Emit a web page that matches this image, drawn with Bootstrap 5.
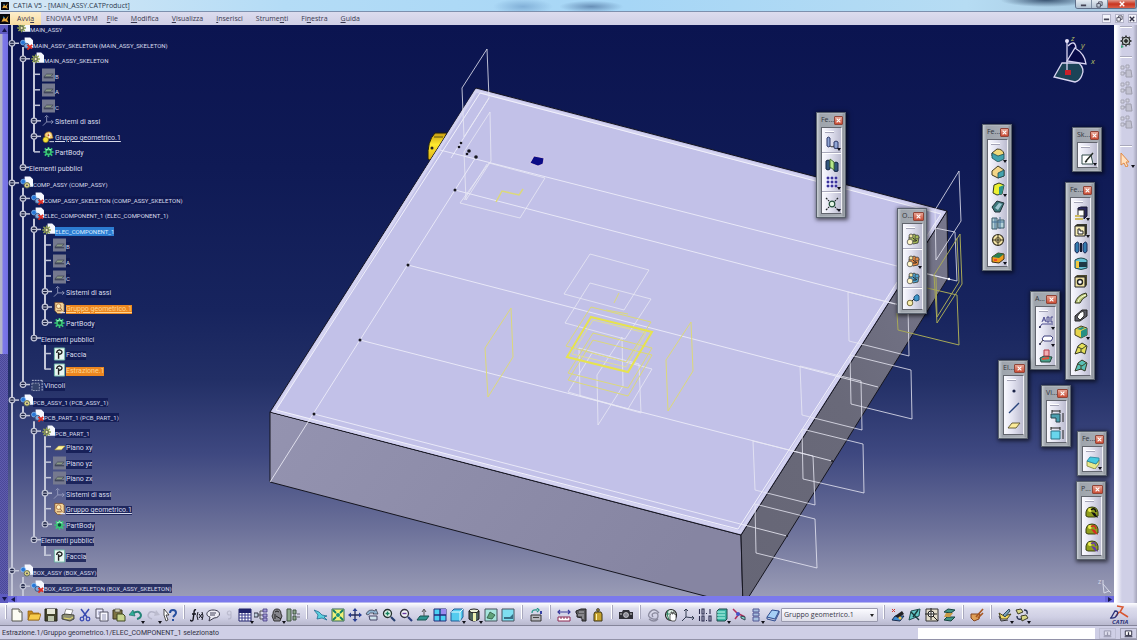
<!DOCTYPE html>
<html lang="it">
<head>
<meta charset="utf-8">
<meta name="viewport" content="width=device-width, initial-scale=1">
<title>CATIA V5 - [MAIN_ASSY.CATProduct]</title>
<link href="https://cdn.jsdelivr.net/npm/bootstrap@5.3.0/dist/css/bootstrap.min.css" rel="stylesheet">
<style>
body{font-family:"Open Sans","Noto Sans",sans-serif;font-size:7px;line-height:12px;color:#303044;background:#cfcfe6}
button,input,select{font-family:inherit}
button{border:0;background:none;padding:0;color:inherit}
svg{display:block}
.titlebar{height:12px;padding:1px 0 0 1px;border-bottom:1px solid #7d90ae;color:#2c3a50;
 background:radial-gradient(ellipse 30px 8px at 46% 60%,#6d9cc8aa,transparent),radial-gradient(ellipse 32px 6px at 52% 60%,#486c98aa,transparent),radial-gradient(ellipse 46px 7px at 92% 0,#27405fdd,transparent),linear-gradient(90deg,#d6e8f5,#b4dcf6 25%,#a6d6f6 55%,#b6dcf3 85%,#a3c4dc)}
.winbtns{height:9px;margin-top:-1px;border:1px solid #60708a;border-top:0;border-radius:0 0 3px 3px;overflow:hidden}
.winbtns button{width:16px;background:linear-gradient(#e4ebf2,#b3c2d2);border-right:1px solid #7f8ea2;display:flex;align-items:center;justify-content:center}
.winbtns .quit{width:28px;background:linear-gradient(#e19a8c,#c83520 50%,#d9604a)}
.menubar{height:13px;background:linear-gradient(#dcdcee,#cfcfe5)}
.menubar a{color:#3a3a50;text-decoration:none;padding:0 7px 0 6px;line-height:13px}
.menubar a.start{padding:0 7px;background:linear-gradient(#fdeecb,#f8dc9f)}
.menubar a.wide{padding:0 3px 0 5px}
.docbtns button{width:9px;height:9px;background:#f4f4fb;border:1px solid #b3b3c8}
.vscroll{width:8px;background:linear-gradient(90deg,#b4b4c8 2px,#7d79ea 3px,#7470e2)}
.vscroll button{height:9px;background:#5d5ac0;display:flex;align-items:center;justify-content:center}
.vthumb{flex:4 1 0}
.vrest{flex:3 1 0;background:repeating-conic-gradient(#5f5cae 0 25%,#4a4898 0 50%) 0 0/2px 2px}
.hscroll{height:7px;background:#7b79ec;border-bottom:1px solid #b6b6ee}
.hscroll button{width:9px;background:#6a68dc;display:flex;align-items:center;justify-content:center}
.stage{background:linear-gradient(#0b1450 0,#0f1a55 25%,#17245e 50%,#222f66 62%,#3e4880 75%,#6b7099 88%,#9a9cb6 100%)}
.scene{position:absolute;inset:0;width:100%;height:100%}
.tree{position:relative;flex:1;margin-top:-3px;width:240px}
.branches{position:absolute;inset:0;width:240px;height:100%}
.node{flex:1 1 0;min-height:0;position:relative}
.node svg{width:13px;height:14px;flex:none;margin-top:-3px}
.node a{color:#d8dbec;text-decoration:none;line-height:9px;white-space:nowrap;background:#0f1850cc;font-family:Roboto,"Open Sans",sans-serif;font-size:6px}
.node a.mix{font-size:7px}
.node a.ul{text-decoration:underline}
.node a.sel{background:#2c7cd2;color:#d8ecff}
.node a.hot{background:#ec861f;color:#ffd58e}
.lv0{padding-left:9px}.lv1{padding-left:12px}.lv2{padding-left:23px}.lv3{padding-left:34px}.lv4{padding-left:45px}
.pub1{padding-left:21px}.pub2{padding-left:33px}
.palette{position:absolute;width:30px;padding:0 3px 3px 4px;background:linear-gradient(90deg,#c7ccd2,#9ea4ac 12%,#a9aeb5 88%,#82878f);border:1px solid #59616d;outline:1px solid #c9ced555;outline-offset:-2px;box-shadow:1px 1px 4px 1px #0009}
.palette header{height:14px;color:#30343c;line-height:14px}
.palette header button{width:11px;height:9px;margin-right:-1px;background:linear-gradient(#e8a595,#cb4c35);border:1px solid #8f4438;border-radius:1px;display:flex;align-items:center;justify-content:center}
.pbody{border:1px solid #62656e;border-right-color:#f0f0f5;padding:6px 0 1px;background:linear-gradient(90deg,#fafaff,#e2e2f0 45%,#bcbcd0);position:relative}
.pbody::before{content:"";position:absolute;left:3px;top:3px;width:9px;height:2px;background:#fff;border-bottom:1px solid #a5a5b8}
.pbody hr,.rail hr{margin:2px 0;border:0;height:1px;background:#fff;opacity:1;box-shadow:0 -1px #a9a9bc}
.tool{width:17px;height:17px;position:relative;display:flex;align-items:center;justify-content:center;flex:none}
.tool svg{width:14px;height:14px}
.drop::after{content:"";position:absolute;right:-1px;bottom:0;border:2px solid transparent;border-top:3px solid #101018;border-bottom:0}
.tight .tool{width:16px}
.dim{opacity:.35}
.rail{width:23px;padding-top:2px;background:linear-gradient(90deg,#fff 2px,#eeeef8 4px,#cfcfe6 8px,#cfcfe6 19px,#a5a5ba)}
.rail hr{width:12px;margin:0}
.toolbar{height:23px;padding-top:2px;background:linear-gradient(#fdfdff,#dcdcec 25%,#cfcfe4 65%,#b9b9cf);border-bottom:1px solid #85859a}
.grip{width:11px;height:14px;flex:none;align-self:flex-start;background:linear-gradient(90deg,transparent 5px,#fff 5px,#fff 6px,#a9a9be 6px,#a9a9be 7px,transparent 7px)}
.toolbar .grip:first-child{width:8px}
.picker{position:relative;width:97px;height:14px}
.picker select{width:100%;height:14px;padding:0 2px;font-size:7px;line-height:12px;color:#383848;border:1px solid #9a9aae;border-radius:1px;background:linear-gradient(#fbfbff,#dedee9);appearance:none}
.picker::after{content:"";position:absolute;right:4px;top:6px;border:2px solid transparent;border-top:3px solid #222;border-bottom:0}
.status{height:14px;padding:1px 0 0 2px;border-bottom:1px solid #9292a8;font-family:Roboto,"Open Sans",sans-serif}
.status input{width:177px;height:11px;border:0;background:#fff;font-size:7px;padding:0 3px}
.status button{width:17px;height:11px;border:1px solid #a0a0b4;display:flex;align-items:center;justify-content:center}
</style>
<script src="https://cdn.jsdelivr.net/npm/bootstrap@5.3.0/dist/js/bootstrap.bundle.min.js"></script>
</head>
<body>
<svg width="0" height="0" class="position-absolute" aria-hidden="true"><defs>
<g id="gear"><path d="M7 1.5v11M1.5 7h11M3 3l8 8M11 3l-8 8" stroke="currentColor" stroke-width="1.8"/><circle cx="7" cy="7" r="3.4" fill="currentColor"/></g>
<symbol id="i-app" viewBox="0 0 14 14"><path fill="#07070c" d="M0 0h14v14H0z"/><path d="M2 11 5 5l3 2 4-5-2 6 2 4-5-2z" fill="#e8a83c"/><path d="m4 3 3 2-2 1z" fill="#4ad"/></symbol>
<symbol id="i-doc" viewBox="0 0 14 14"><path d="M5 0h6l3 3v8H5z" fill="#f6f8ff"/><circle cx="3.5" cy="5.5" r="2.6" fill="#2877d8" stroke="#9bd0ff" stroke-width=".7"/><circle cx="7.5" cy="9.5" r="3" fill="#ddd284" stroke="#5d6b52"/><circle cx="7.5" cy="9.5" r="1" fill="#446"/></symbol>
<symbol id="i-docr" viewBox="0 0 14 14"><path d="M5 0h6l3 3v8H5z" fill="#f6f8ff"/><circle cx="3.2" cy="5.5" r="2.6" fill="#2877d8" stroke="#9bd0ff" stroke-width=".7"/><circle cx="7" cy="9" r="2.7" fill="#80aadd" stroke="#35507d"/><path d="m8 8 5 4M13 8l-5 5" stroke="#e02b22" stroke-width="2"/></symbol>
<symbol id="i-part" viewBox="0 0 14 14"><path d="M6 0h5l3 3v8H6z" fill="#f6f8ff"/><g transform="translate(-1 1) scale(.85)" color="#94a652"><use href="#gear"/></g><circle cx="5" cy="7" r="1.8" fill="#eff0b0" stroke="#555"/></symbol>
<symbol id="i-plane" viewBox="0 0 14 14"><path fill="#75798f" d="M0 0h14v14H0z"/><path d="m2 9 3-3h7l-3 3z" fill="#8c9a87" stroke="#33394d" stroke-width=".7"/><path d="M2 10h10" stroke="#2e3448"/></symbol>
<symbol id="i-planey" viewBox="0 0 14 14"><path d="m2 10 4-4h7L9 10z" fill="#fff39a" stroke="#c6ae3c" stroke-width=".6"/></symbol>
<symbol id="i-planeb" viewBox="0 0 14 14"><path d="m1 10 4-5h8l-4 5z" fill="#fbeb9a" stroke="#5c532a" stroke-width=".9"/></symbol>
<symbol id="i-axis" viewBox="0 0 14 14"><path d="M5 2v6l-4 4M5 8h7M3 3l2-2 2 2M10 6l2 2-2 2" fill="none" stroke="#9da4c4" stroke-width=".9"/></symbol>
<symbol id="i-set" viewBox="0 0 14 14"><path d="M3 6a4 4 0 0 1 8-1l1 3-3 1H4z" fill="#f7d274" stroke="#a66a22" stroke-width=".7"/><circle cx="4" cy="10" r="3" fill="#f4e23c" stroke="#8b7a12" stroke-width=".7"/><path d="M6 5h4M8 3v5M8 12h5" stroke="#fff" stroke-width=".9"/><circle cx="7" cy="5" r="1" fill="#b5452c"/></symbol>
<symbol id="i-setb" viewBox="0 0 14 14"><path d="M2 1h8l2 2v8l-3 2H5l-3-3z" fill="#f3d59a" stroke="#7b4a25" stroke-width=".8"/><circle cx="6" cy="5" r="2.500" fill="#fff0c2" stroke="#a35e2c" stroke-width=".8"/><path d="M4 10h5M8 7l2 3" stroke="#8a5a3a"/><path d="M8 12h5" stroke="#e6e6f2" stroke-width="1.200"/></symbol>
<symbol id="i-body" viewBox="0 0 14 14"><g color="#38c777"><use href="#gear"/></g><circle cx="7" cy="7" r="1.9" fill="#0f4a3b"/><path d="M4 5q3-3 6 0" stroke="#b5ffd0" fill="none"/></symbol>
<symbol id="i-pub" viewBox="0 0 14 14"><path fill="#e8f6f2" stroke="#6fb7a8" d="M1.500.5h11v13h-11z"/><path d="M6 12V5M4 6q0-3 3-3.500 4 1 2 4-1 1-3 1" fill="none" stroke="#202020" stroke-width="1.500"/></symbol>
<symbol id="i-cons" viewBox="0 0 14 14"><path d="M1 5h8v8H1z" fill="#34436c" stroke="#99a2bd" stroke-dasharray="2 1"/><path d="M1 2h12M12 2v11" stroke="#c6cbe0" stroke-dasharray="2 1"/></symbol>
<symbol id="i-new" viewBox="0 0 14 14"><path d="M2 1h7l3 3v9H2z" fill="#fdfdf4" stroke="#55554d"/><path d="M9 1v3h3" fill="#ddc" stroke="#55554d" stroke-width=".8"/></symbol>
<symbol id="i-open" viewBox="0 0 14 14"><path d="M1 3h4l1 2h6v7H1z" fill="#c98c20" stroke="#8d5d0c" stroke-width=".7"/><path d="m1 12 2-6h11l-2 6z" fill="#f7cb4b" stroke="#8d5d0c" stroke-width=".7"/></symbol>
<symbol id="i-save" viewBox="0 0 14 14"><path d="M1 1h12v12H1z" fill="#43442d" stroke="#22231a"/><path d="M3 1h8v5H3z" fill="#e5e6d6"/><path d="M4 8h6v5H4z" fill="#bec6ae"/></symbol>
<symbol id="i-print" viewBox="0 0 14 14"><path d="m5 1 7 1-2 5H3z" fill="#fff" stroke="#666" stroke-width=".7"/><path d="m1 7 3-1 9 1v4l-4 2-8-2z" fill="#8d8f75" stroke="#2e2e28" stroke-width=".8"/><path d="m3 10 6 1 3-2" stroke="#e8dc6b" fill="none"/></symbol>
<symbol id="i-cut" viewBox="0 0 14 14"><path d="m3 1 6 8M11 1 5 9" stroke="#384bb0" stroke-width="1.500"/><circle cx="4" cy="11" r="1.800" fill="none" stroke="#3c4db5" stroke-width="1.300"/><circle cx="10" cy="11" r="1.800" fill="none" stroke="#3c4db5" stroke-width="1.300"/></symbol>
<symbol id="i-copy" viewBox="0 0 14 14"><path d="M1 1h7v9H1z" fill="#eef" stroke="#556"/><path d="M5 4h8v9H5z" fill="#f8f8ff" stroke="#556"/><path d="M7 7h4M7 9h4M7 11h4M3 4h2M3 6h1" stroke="#7b7fa5" stroke-width=".8"/></symbol>
<symbol id="i-paste" viewBox="0 0 14 14"><path d="M1 2h9v9H1z" fill="#7e7442" stroke="#3b371f"/><path d="M3 1h5v3H3z" fill="#d0cfae" stroke="#444" stroke-width=".6"/><path d="M5 6h6l2 2v5H5z" fill="#c7d48e" stroke="#3f4722"/></symbol>
<symbol id="i-undo" viewBox="0 0 14 14"><path d="M3 6q7-5 9 1 0 3-4 4" fill="none" stroke="#238477" stroke-width="2"/><path d="m0 7 4-5 2 6z" fill="#2eae99" stroke="#14645a" stroke-width=".6"/></symbol>
<symbol id="i-redo" viewBox="0 0 14 14"><path d="M11 6Q4 1 2 7q0 3 4 4" fill="none" stroke="#b4b4c8" stroke-width="1.500"/><path d="m14 7-4-5-2 6z" fill="#bcbcce"/></symbol>
<symbol id="i-help" viewBox="0 0 14 14"><path d="m1 1 5 6H3l2 5-2 1-2-6z" fill="#fff" stroke="#222" stroke-width=".8"/><path d="M7 5q0-3 3-3t3 3q0 1-3 4M10 11v2" fill="none" stroke="#264f9f" stroke-width="2"/></symbol>
<symbol id="i-fx" viewBox="0 0 14 14"><path d="M6 2Q4 1 4 5L3 12Q2 14 0 12M2 6h4" fill="none" stroke="#15151e" stroke-width="1.400"/><path d="M8 4q-2 4 0 8M12 4q2 4 0 8M9 6l3 4M12 6l-3 4" fill="none" stroke="#15151e"/></symbol>
<symbol id="i-bubble" viewBox="0 0 14 14"><path d="M7 2c9 0 8 8 1 8l-5 3 1-4C-1 8 0 2 7 2z" fill="#edecf4" stroke="#38384a"/><path d="M4 5h6M4 7h5" stroke="#45455c"/></symbol>
<symbol id="i-nine" viewBox="0 0 14 14"><path d="M9 6a2 2 0 1 1 0-2v5q0 2-3 2" fill="none" stroke="#8d8da2" stroke-width="1.200"/></symbol>
<symbol id="i-table" viewBox="0 0 14 14"><path d="M1 1h12v12H1z" fill="#fff" stroke="#20226a"/><path d="M1 1h12v4H1z" fill="#20226a"/><path d="M4 5v8M7 5v8M10 5v8M1 7h12M1 10h12" stroke="#383b8c"/></symbol>
<symbol id="i-graph" viewBox="0 0 14 14"><path d="M4 7h5M6 7V3h3M6 7v4h3" fill="none" stroke="#555"/><path d="M0 5h4v4H0z" fill="#bfd0de" stroke="#334"/><path d="M9 1h4v3H9zM9 6h4v3H9zM9 10h4v3H9z" fill="#a49ad6" stroke="#423a80" stroke-width=".8"/></symbol>
<symbol id="i-lock" viewBox="0 0 14 14"><path d="M3 6q0-5 4-5t4 5l1 2-2 5H4L2 8z" fill="#85858c" stroke="#333"/><path d="M5 4q2-2 4 0M6 8l5 3M5 6v5" stroke="#222" fill="none"/></symbol>
<symbol id="i-rule" viewBox="0 0 14 14"><path d="M1 1h4v12H1zM7 2h3v4H7zM7 8h3v4H7z" fill="#8ca88d" stroke="#415242"/><path d="M11 6h3M11 9h3" stroke="#667"/></symbol>
<symbol id="i-fly" viewBox="0 0 14 14"><path d="m0 2 5 2 3 3 5 1-3 1 3 3-5-2-5 1 1-4z" fill="#5bd2e0" stroke="#226c91" stroke-width=".8"/></symbol>
<symbol id="i-fit" viewBox="0 0 14 14"><path fill="#f0f27a" stroke="#356b58" d="M1 1h12v12H1z"/><path d="m2 2 3 3m7-3L9 5M2 12l3-3m7 3L9 9" stroke="#108064" stroke-width="1.800"/><circle cx="7" cy="7" r="2" fill="#17927c"/></symbol>
<symbol id="i-pan" viewBox="0 0 14 14"><path d="M7 2v10M2 7h10" stroke="#222a5c" stroke-width="1.300"/><path d="m7 0 2.500 3h-5zM7 14l2.500-3h-5zM0 7l3-2.500v5zM14 7l-3-2.500v5z" fill="#283e94"/></symbol>
<symbol id="i-rot" viewBox="0 0 14 14"><path d="M1 6q3-6 9-3l1-2 2 5-5 0 1-1Q5 4 3 7z" fill="#8fb4d2" stroke="#334" stroke-width=".7"/><path d="M4 8h8v4H5z" fill="#cfe3ec" stroke="#446"/></symbol>
<symbol id="i-zin" viewBox="0 0 14 14"><circle cx="5.500" cy="5.500" r="4" fill="#e1f5ec" stroke="#23302e" stroke-width="1.300"/><path d="m9 9 4 4" stroke="#263e6d" stroke-width="2.200"/><path d="M3.500 5.500h4M5.500 3.500v4" stroke="#15805d" stroke-width="1.400"/></symbol>
<symbol id="i-zout" viewBox="0 0 14 14"><circle cx="5.500" cy="5.500" r="4" fill="#f0f2f6" stroke="#33333f" stroke-width="1.300"/><path d="m9 9 4 4" stroke="#2b3c7d" stroke-width="2.200"/><path d="M3.500 5.500h4" stroke="#6c3aa0" stroke-width="1.400"/></symbol>
<symbol id="i-normal" viewBox="0 0 14 14"><path d="m1 12 3-4h9l-3 4z" fill="#2f9590" stroke="#175351"/><path d="M8 8V2M6 4l2-3 2 3" stroke="#555" fill="none"/></symbol>
<symbol id="i-multi" viewBox="0 0 14 14"><path d="M1 1h12v12H1z" fill="#4cd1f3" stroke="#222b7a"/><path d="M8 1h5v6H8z" fill="#9a8af0"/><path d="M7 1v12M1 7h12" stroke="#222b7a" stroke-width="1.300"/></symbol>
<symbol id="i-cube" viewBox="0 0 14 14"><path d="m1 4 3-3h9v8l-3 4H1z" fill="#54cbee" stroke="#235b97"/><path d="M1 4h9v9M10 4l3-3" fill="none" stroke="#e4fbff"/></symbol>
<symbol id="i-shade" viewBox="0 0 14 14"><ellipse cx="7" cy="3" rx="5" ry="2" fill="#eaf0d9" stroke="#222"/><path d="M2 3v8q5 4 10 0V3q-5 4-10 0z" fill="#4b625b" stroke="#1a1a1a"/><path d="M6 5h3v8H6z" fill="#ebf0b1"/></symbol>
<symbol id="i-view" viewBox="0 0 14 14"><path d="M1 1h12v12H1z" fill="#a6e5dd" stroke="#48525e"/><path d="m3 10 3-6 5 3-3 4z" fill="#5fa178" stroke="#234b35" stroke-width=".7"/></symbol>
<symbol id="i-view2" viewBox="0 0 14 14"><path d="M1 1h12v12H1z" fill="#7edff1" stroke="#48525e"/><path d="M3 9h6l3-3v5H3z" fill="#386f85"/></symbol>
<symbol id="i-catalog" viewBox="0 0 14 14"><path d="M2 7h10v6H2z" fill="#b8b8be" stroke="#333"/><path d="M4 9h6v1H4z" fill="#444"/><path d="M3 5q0-4 5-3M8 0l2 2-2 2" fill="none" stroke="#23988a" stroke-width="1.300"/><path d="M11 3h2v3h-2z" fill="#3742a5"/></symbol>
<symbol id="i-meas" viewBox="0 0 14 14"><path d="M1 4h12M3 2 1 4l2 2M11 2l2 2-2 2" fill="none" stroke="#3a3a9c" stroke-width="1.200"/><path d="M1 9h12v4H1z" fill="#fff" stroke="#8c2650"/><path d="M4 9v2M7 9v2M10 9v2" stroke="#8c2650"/></symbol>
<symbol id="i-clamp" viewBox="0 0 14 14"><path d="m2 3 5-2h5v12H8v-3l-5-1V6l-1-1z" fill="#58595c" stroke="#222"/><path d="M5 4h5M9 6v5M4 7h4" stroke="#b9b9bd"/></symbol>
<symbol id="i-mass" viewBox="0 0 14 14"><circle cx="7" cy="2" r="1.500" fill="#8b7a31" stroke="#333" stroke-width=".7"/><path d="M4 4h6l1 2v7H3V6z" fill="#c5a22f" stroke="#3d3514"/><path d="M5 6h1v6H5z" fill="#fff2ac"/></symbol>
<symbol id="i-cam" viewBox="0 0 14 14"><path d="M0 4h3l1-2h6l1 2h3v7H0z" fill="#303038"/><circle cx="7" cy="7" r="2.500" fill="#8d8d99" stroke="#eee" stroke-width=".6"/><path d="M1 6h2M11 6h2" stroke="#ccc"/></symbol>
<symbol id="i-swirl" viewBox="0 0 14 14"><path d="M12 5Q7-1 3 4t3 7q5 1 5-3T7 5Q4 6 6 9M2 11q5 4 9 0" fill="none" stroke="#8a8a9e" stroke-width="1.300"/></symbol>
<symbol id="i-globe" viewBox="0 0 14 14"><circle cx="7" cy="7" r="5.500" fill="#dfeee4" stroke="#222" stroke-width="1.200"/><path d="M4 2q-2 5 1 10M2 6h4" stroke="#2c8060" fill="none"/><path d="M6 12V7l1-1V4h1v2h1V4h1v2h1l1 1v4l-1 2H8z" fill="#fff" stroke="#222" stroke-width=".7"/></symbol>
<symbol id="i-axes" viewBox="0 0 14 14"><path d="M5 9V1M5 9l8 1M5 9l-4 4M3 3l2-2 2 2M11 8l2 2-2 2" fill="none" stroke="#333c50"/></symbol>
<symbol id="i-tol" viewBox="0 0 14 14"><path d="M1.500 1v5M4 1h2v5H4zM8 5.500h1M12 1v5M1.500 8v5M4 8h2v5H4zM8 12.500h1M11 8h2v5h-2z" fill="none" stroke="#282a4b" stroke-width="1.100"/></symbol>
<symbol id="i-stack" viewBox="0 0 14 14"><path d="m2 3 2-2h8v10l-2 2H2z" fill="#3bb4a4" stroke="#1e4a4a"/><path d="M2 4h8M2 7h8M2 10h8" stroke="#c3fff0"/></symbol>
<symbol id="i-joint" viewBox="0 0 14 14"><path d="m1 1 5 5M3 11l4-5 6 3" stroke="#b02e5c" stroke-width="1.500" fill="none"/><circle cx="6" cy="6" r="2" fill="#4554c8"/><path d="m9 8 4 1v3l-4-2z" fill="#8dc" stroke="#345"/></symbol>
<symbol id="i-layers" viewBox="0 0 14 14"><path d="M4 1h6v3H4zM4 5h6v3H4zM4 9h6v4H4z" fill="#a9c1e0" stroke="#525995"/></symbol>
<symbol id="i-sheet" viewBox="0 0 14 14"><path d="m1 9 5-7 7 1-4 8z" fill="#a6cff5" stroke="#2f4d90"/><path d="m1 9 0 2 8 2 4-8V3" fill="none" stroke="#2f4d90"/></symbol>
<symbol id="i-sk1" viewBox="0 0 14 14"><path d="m1 12 3-4h9l-4 5z" fill="#3d8bd0" stroke="#1b2d4e"/><path d="m4 8 7-5 2 3-6 4z" fill="#202024"/><path d="m1 1 3 3M4 1 1 4" stroke="#d1382c"/><circle cx="9" cy="10" r="1.500" fill="#f2c04a"/></symbol>
<symbol id="i-sk2" viewBox="0 0 14 14"><path d="m1 12 2-9 9-2-1 7z" fill="#62c6c5" stroke="#1d4c4c"/><path d="m3 4 8 8M10 2 5 9" stroke="#183a3a" stroke-width="1.400"/></symbol>
<symbol id="i-sk3" viewBox="0 0 14 14"><path d="M1 1h12v12H1z" fill="#e2dccb" stroke="#333"/><circle cx="6" cy="6" r="3" fill="#fff" stroke="#222"/><path d="m8 8 5 5M6 0v12M0 6h12" stroke="#222"/></symbol>
<symbol id="i-sk4" viewBox="0 0 14 14"><path d="m2 4 4-3 7 1-4 3zM2 12l3-3h8l-4 4z" fill="#3e9384" stroke="#194540"/><path d="M4 5h7l-3 4H2z" fill="#c99b48"/></symbol>
<symbol id="i-paint" viewBox="0 0 14 14"><path d="M1 6h9l-1 5-5 2-3-3z" fill="#de9f58" stroke="#84451e"/><path d="m6 9 7-8M8 10l5-5" stroke="#a85722" stroke-width="1.600"/></symbol>
<symbol id="i-book" viewBox="0 0 14 14"><path d="m1 5 5 3 7-2-4 5H3z" fill="#f1d964" stroke="#4c4820"/><path d="m5 7 6-6 1 2-5 6z" fill="#78a2b5" stroke="#31495e"/><path d="M1 8l2 5 7-1" fill="none" stroke="#333"/></symbol>
<symbol id="i-book2" viewBox="0 0 14 14"><path d="m1 2 5-1 2 3-5 2zM6 8l5-1 2 3-6 3z" fill="#d8d787" stroke="#3c3c2a"/><path d="M9 2q4 0 3 4M2 8q0 4 4 3" fill="none" stroke="#28314e" stroke-width="1.400"/></symbol>
<symbol id="i-hole" viewBox="0 0 14 14"><path d="M2 2q1-2 3 0v8q-1 2-3 0zM9 6q2-2 4 0v6q-2 1-4 0z" fill="#8fa5d4" stroke="#2e3968"/><path d="M5 10q2 2 4 0" fill="none" stroke="#333"/></symbol>
<symbol id="i-mirror" viewBox="0 0 14 14"><path d="M1 3q2-2 4 0v8q-2 2-4 0zM9 5q2-2 4 0v8q-2 1-4 0z" fill="#31557b" stroke="#162746"/><path d="m5 1 4 3v8l-4-3z" fill="#b8e98b" stroke="#487236"/></symbol>
<symbol id="i-grid" viewBox="0 0 14 14"><path d="M3 1v12M7 1v12M11 1v12M1 3h12M1 7h12M1 11h12" stroke="#817ad6"/><path d="M2 2h2v2H2zM6 2h2v2H6zM10 2h2v2h-2zM2 6h2v2H2zM6 6h2v2H6zM10 6h2v2h-2zM2 10h2v2H2zM6 10h2v2H6zM10 10h2v2h-2z" fill="#393399"/></symbol>
<symbol id="i-scale" viewBox="0 0 14 14"><circle cx="7" cy="7" r="2.800" fill="#e4f5e5" stroke="#244f3a" stroke-width="1.200"/><path d="m1 1 3 3m9-3-3 3M1 13l3-3m9 3-3-3" stroke="#22282a" stroke-dasharray="2 1" stroke-width="1.300"/></symbol>
<symbol id="i-bool" viewBox="0 0 14 14"><path d="m3 5 5-3 5 3-1 6-5 1-4-3z" fill="currentColor" stroke="#36382f" stroke-width=".8"/><circle cx="5" cy="4" r="2" fill="#eee3a2" stroke="#444" stroke-width=".8"/><circle cx="11" cy="5" r="2" fill="currentColor" stroke="#444" stroke-width=".8"/><circle cx="4" cy="10" r="2.800" fill="#fff5c5" stroke="#555" stroke-width=".8"/><path d="m7 6 4 3M7 9h3" stroke="#222"/></symbol>
<symbol id="i-lump" viewBox="0 0 14 14"><circle cx="4" cy="10" r="2.800" fill="#f8ecaa" stroke="#746c3c"/><path d="M8 4q3-4 5-1v4q-3 2-5 0z" fill="#3d95c9" stroke="#225179"/><path d="m6 8 2-2" stroke="#222"/></symbol>
<symbol id="i-fillet" viewBox="0 0 14 14"><path d="m1 5 5-4q6 0 7 5l-5 5-7-3z" fill="#f1d978" stroke="#433d22"/><path d="m1 5 6 3 6-2v5l-6 3-6-4z" fill="#43a2ae" stroke="#214a51" stroke-width=".8"/></symbol>
<symbol id="i-chamfer" viewBox="0 0 14 14"><path d="m1 6 6-5 6 4v6l-6 2-6-3z" fill="#f3d587" stroke="#433d22"/><path d="m7 8 6-3v6l-6 2z" fill="#43a2ae" stroke="#214a51" stroke-width=".8"/></symbol>
<symbol id="i-draft" viewBox="0 0 14 14"><path d="m3 3 5-2 5 2-2 9-5 1-4-2z" fill="#ecf031" stroke="#333b20"/><path d="m8 5 5-2-2 9-3 1z" fill="#2c948c"/></symbol>
<symbol id="i-shell" viewBox="0 0 14 14"><path d="m1 8 5-6 7 2-4 9H4z" fill="#3c777b" stroke="#203037"/><path d="m4 9 4-5 3 1-4 6z" fill="#9fc5d1"/></symbol>
<symbol id="i-thick" viewBox="0 0 14 14"><path d="M1 2h5v11H1zM7 4h6v8H7z" fill="#b5d3da" stroke="#3b5966"/><path d="M1 6h12M4 2v11M9 1v12" stroke="#436d92"/></symbol>
<symbol id="i-thread" viewBox="0 0 14 14"><circle cx="7" cy="7" r="5.500" fill="#f4e5a6" stroke="#353023" stroke-width="1.200"/><path d="M7 1v12M1 7h12" stroke="#353023"/><circle cx="7" cy="7" r="2.500" fill="none" stroke="#5c5130"/></symbol>
<symbol id="i-face" viewBox="0 0 14 14"><path d="m1 7 6-4 6 1v5l-5 4-7-1z" fill="#ef9c1d" stroke="#413014"/><path d="m1 7 6-4 6 1-5 4z" fill="#277d53"/><path d="M3 10h3" stroke="#e33" stroke-width="1.500"/></symbol>
<symbol id="i-sketch" viewBox="0 0 14 14"><path d="M1 4h9l2 9H1z" fill="#fff" stroke="#324d4b"/><path d="m5 10 7-8M4 11l2-1" stroke="#252c25" stroke-width="1.500"/></symbol>
<symbol id="i-pad" viewBox="0 0 14 14"><path d="M4 2 7 1h6v9l-3 3V4H4z" fill="#29275d" stroke="#171733"/><path d="M4 4h6v6H4z" fill="#fff" stroke="#333"/><path d="M1 10h5M1 13h8" stroke="#cebb63" stroke-width="2"/></symbol>
<symbol id="i-pocket" viewBox="0 0 14 14"><path d="M1 3 3 1h10v10l-2 2H1z" fill="#37382d"/><path d="M1 3h10v10H1z" fill="#f3eab5" stroke="#222"/><path d="M4 6h2v2h3v3H4z" fill="#fff" stroke="#222"/></symbol>
<symbol id="i-shaft" viewBox="0 0 14 14"><path d="M1 4q3-4 4 0v7q-2 4-4 0zM9 4q3-4 4 0v7q-2 4-4 0z" fill="#327aae" stroke="#1a2857"/><path d="M6 3h2v9H6z" fill="#13192e"/></symbol>
<symbol id="i-groove" viewBox="0 0 14 14"><path d="M1 3q6-4 12 0v8q-6 3-12 0z" fill="#63bfd2" stroke="#24494c"/><path d="M5 5h8v5H5z" fill="#1f3844"/><path d="M2 4h3v7H2z" fill="#f1c83e"/></symbol>
<symbol id="i-holes" viewBox="0 0 14 14"><path d="M1 3 3 1h10v10l-2 2H1z" fill="#4a462c"/><path d="M1 3h10v10H1z" fill="#eee1a0" stroke="#222"/><circle cx="6" cy="8" r="2.500" fill="#fff" stroke="#222" stroke-width="1.400"/></symbol>
<symbol id="i-rib" viewBox="0 0 14 14"><path d="M1 12Q3 4 12 2l1 3Q8 7 6 12z" fill="currentColor" stroke="#343823"/><path d="M4 11q1-5 8-7" fill="none" stroke="#faffdf"/></symbol>
<symbol id="i-slot" viewBox="0 0 14 14"><path d="m1 8 7-6h5v6l-7 5H1z" fill="#5b5b65" stroke="#222"/><path d="M3 9q4-7 7-5v4l-4 4z" fill="#fff" stroke="#333"/></symbol>
<symbol id="i-solid" viewBox="0 0 14 14"><path d="m1 4 6-3 6 2v7l-6 3-6-3z" fill="#e7d44c" stroke="#444124"/><path d="m7 6 6-3v7l-6 3zM3 4l5-2 3 1-4 2z" fill="#268f83"/></symbol>
<symbol id="i-loft" viewBox="0 0 14 14"><path d="m1 12 3-8 4-3 5 3-2 8-4-2z" fill="currentColor" stroke="#343823"/><path d="m4 5 4 2 4-3M7 7v4" fill="none" stroke="#3c4528"/></symbol>
<symbol id="i-abc" viewBox="0 0 14 14"><path d="M3 7l2-5 2 5M4 5h2M8 2v5h2V2zM14 2h-2v5h2M3 9h11M3 9l-3 4" fill="none" stroke="#403f87" stroke-width=".9"/><circle cx="1" cy="12" r="1" fill="#202040"/></symbol>
<symbol id="i-flag" viewBox="0 0 14 14"><path d="M5 4h7l2 2-2 3H5L3 7z" fill="#fff" stroke="#3d3f7d"/><path d="m4 8-3 4" stroke="#444"/><circle cx="1" cy="12" r="1" fill="#224"/></symbol>
<symbol id="i-stamp" viewBox="0 0 14 14"><path d="m1 9 4-2 8 1-2 5H2z" fill="#4aa18c" stroke="#24483e"/><path d="M5 1h5v6H5z" fill="#f0b0b4" stroke="#b23845"/><path d="m3 10 7-1" stroke="#e3543a" stroke-width="2"/></symbol>
<symbol id="i-point" viewBox="0 0 14 14"><circle cx="7" cy="7" r="1.600" fill="#1b2448"/></symbol>
<symbol id="i-line" viewBox="0 0 14 14"><path d="m2 12 10-10" stroke="#28447c" stroke-width="1.300"/></symbol>
<symbol id="i-dim" viewBox="0 0 14 14"><path d="M2 2h8M2 1v3M10 1v3M13 4v9" stroke="#222"/><path d="M1 5h9v8H6V9H1z" fill="#4b9fb0" stroke="#28454d"/></symbol>
<symbol id="i-dim2" viewBox="0 0 14 14"><path d="M1 2h9M1 1v3M10 1v3M13 4v9" stroke="#222"/><path d="M1 5h9v8H1z" fill="#68d6ec" stroke="#2a7084"/></symbol>
<symbol id="i-surf" viewBox="0 0 14 14"><path d="m1 6 9 3 3-4v4l-4 5-8-3z" fill="#e6e88c" stroke="#7d7f3b" stroke-width=".8"/><path d="m1 6 3-4 9 1v2l-3 4z" fill="#45c9df" stroke="#268299" stroke-width=".8"/></symbol>
<symbol id="i-ball" viewBox="0 0 14 14"><path d="M1 11q-1-9 6-9t6 9l-3 1H3z" fill="#8f9d1d" stroke="#3a4012"/><circle cx="5" cy="5" r="2" fill="#f0ef56"/><path d="m6 7 4 1 3 5-4-2z" fill="currentColor"/><path d="M6 5q4-3 5 2" stroke="currentColor" stroke-width="1.500" fill="none"/></symbol>
<symbol id="i-wheel" viewBox="0 0 14 14"><g color="#474b50"><use href="#gear"/></g><circle cx="7" cy="7" r="4" fill="#adb5b4" stroke="#222"/><path d="M5 7h4M7 5v4" stroke="#222" stroke-width="1.500"/><path d="m2 11 3 2-3 1z" fill="#34a377"/></symbol>
<symbol id="i-boxes" viewBox="0 0 14 14"><path d="M2 2h3v3H2zM7 1h3v3H7zM2 8h3v3H2z" fill="#ddd" stroke="#555"/><path d="M7 6h5l1 7H7z" fill="#aaa" stroke="#444"/><path d="M5 9h2" stroke="#333"/></symbol>
<symbol id="i-cursor" viewBox="0 0 14 14"><path d="m2 0 8 9H7l2 4-2 1-2-4-3 2z" fill="#ffe1c0" stroke="#e18a45"/></symbol>
<symbol id="i-min" viewBox="0 0 8 8"><path d="M1 5h6" stroke="#445" stroke-width="2"/></symbol>
<symbol id="i-max" viewBox="0 0 8 8"><path d="M1 3h4v4H1zM3 3V1h4v4H5" fill="none" stroke="#445"/></symbol>
<symbol id="i-x" viewBox="0 0 8 8"><path d="m1 1 6 6M7 1 1 7" stroke="currentColor" stroke-width="1.800"/></symbol>
<symbol id="i-screen" viewBox="0 0 14 14"><path d="M2 3h10v7H2zM1 12h12" fill="#fff" stroke="currentColor" stroke-width="1.500"/><path d="M7 5v5" stroke="currentColor" stroke-width="2"/></symbol>
</defs></svg>

<div class="d-flex flex-column vh-100 overflow-hidden">
<header class="titlebar d-flex align-items-center flex-shrink-0">
 <svg width="8" height="8"><use href="#i-app"/></svg><span class="ms-1">CATIA V5 - [MAIN_ASSY.CATProduct]</span>
 <div class="winbtns d-flex ms-auto align-self-start">
  <button aria-label="Riduci"><svg width="7" height="7"><use href="#i-min"/></svg></button>
  <button aria-label="Ripristina"><svg width="7" height="7"><use href="#i-max"/></svg></button>
  <button class="quit text-white" aria-label="Chiudi"><svg width="6" height="6"><use href="#i-x"/></svg></button>
 </div>
</header>
<nav class="menubar d-flex align-items-center flex-shrink-0" aria-label="Menu">
 <svg width="10" height="10"><use href="#i-app"/></svg>
 <a class="start" href="#">Avvi<u>a</u></a><a class="wide" href="#">ENOVIA V5 VPM</a><a href="#"><u>F</u>ile</a><a href="#"><u>M</u>odifica</a><a href="#"><u>V</u>isualizza</a><a href="#"><u>I</u>nserisci</a><a href="#">Strume<u>n</u>ti</a><a href="#">Fi<u>n</u>estra</a><a href="#"><u>G</u>uida</a>
 <div class="docbtns d-flex ms-auto gap-1">
  <button aria-label="Riduci documento"><svg width="7" height="7"><use href="#i-min"/></svg></button>
  <button aria-label="Ripristina documento"><svg width="7" height="7"><use href="#i-max"/></svg></button>
  <button aria-label="Chiudi documento"><svg width="6" height="6"><use href="#i-x"/></svg></button>
 </div>
</nav>

<main class="d-flex flex-grow-1 overflow-hidden">
 <div class="vscroll d-flex flex-column flex-shrink-0">
  <button aria-label="Su"><svg width="5" height="4"><path d="M0 4h5L2.500 0z" fill="#15154a"/></svg></button>
  <div class="vthumb"></div>
  <div class="vrest"></div>
  <button aria-label="Giù"><svg width="5" height="4"><path d="M0 0h5L2.500 4z" fill="#15154a"/></svg></button>
 </div>
 <div class="d-flex flex-column flex-grow-1 overflow-hidden">
  <section class="stage position-relative flex-grow-1 d-flex flex-column overflow-hidden">
   <svg class="scene" viewBox="8 25 1106 571" preserveAspectRatio="none" fill="none" stroke-width="1">
    <defs>
     <linearGradient id="front" x1="0" x2="1" y1="0" y2=".3"><stop stop-color="#9493b0"/><stop offset="1" stop-color="#8685a2"/></linearGradient>
     <linearGradient id="side" x1="1" x2="0" y1="0" y2="1"><stop stop-color="#77778c"/><stop offset=".5" stop-color="#696979"/><stop offset="1" stop-color="#666676"/></linearGradient>
     <linearGradient id="knob" x1="0" x2="0" y1="0" y2="1"><stop stop-color="#c79b12"/><stop offset=".4" stop-color="#ffe92e"/><stop offset="1" stop-color="#d9a813"/></linearGradient>
    </defs>
    <path d="m447 133-12 0q-8 8-7 26l5 3z" fill="url(#knob)" stroke="#22200c"/><path d="M434 137h9" stroke="#5d5211"/><circle cx="432" cy="148" r="1.500" fill="#222"/>
    <path d="M270 412 741 535 743 606 270 482z" fill="url(#front)" stroke="#15151f"/>
    <path d="M741 535 947 211 948 278 787 536 743 606z" fill="url(#side)" stroke="#15151f"/>
    <path d="M476 88 947 211 741 535 270 412z" fill="#c2c1e8" stroke="#15151f"/>
    <path d="M476 91 943 213 740 532 274 411z" stroke="#d4d3f1" stroke-width="3"/>
    <g stroke="#f1f1fb">
     <path d="M480 93 941 214 738 529 276 410z"/>
     <path d="M440 150 893 265 948 279M455 190 895 304M408 265 878 387M360 340 832 461M314 414 787 536M270 482 455 190 476 157M489 98 451 158" stroke-width=".8"/>
     <g stroke-width=".8" stroke="#e8e9f4">
     <path d="m487 49 2 49-25 39-2-49zM490 112l1 49-25 39-2-48zM489 163l56 15-25 40-60-15zM464 200l23-36"/>
     <path d="m590 254 59 16-25 40-60-16zM590 283l61 16-26 40-60-16zM592 353l60 16-24 40-60-17zM579 348l60 16 2 49-61-17zM622 337l1 49-25 39-1-50z"/>
     <path d="m848 292 60 15 1 49-60-15zM850 355l61 15 1 49-61-15zM800 366l61 15 1 49-60-15zM802 429l61 15 1 49-61-14zM753 441l60 15 2 49-60-15zM755 504l60 15 2 49-61-15zM935 228l20 4 2 49-30-7M959 171l2 50-25 39-1-50z"/>
     </g>
    </g>
    <g stroke="#dcd97a">
     <path d="m591 307 60 15-25 40-60-16zM593 333l59 15-24 40-60-15zM593 340l59 15-24 41-60-16zM511 308l2 49-25 40-3-49zM691 322l2 49-25 40-2-51zM614 303l5-10M606 310l22 4"/>
     <path d="m591 317 61 15-24 40-61-15z" stroke="#e6e34f" stroke-width="2"/><path d="m593 320 53 13-20 34-54-13z" stroke="#e9e779" stroke-width=".7"/>
     <path d="m496 202 6-11 17 4 4-6" stroke-width="1.500"/>
     <path d="m960 234 2 50-25 39-3-48zM957 238l2 44-22 35-1-40M927 288l30 7 2 50-61-15-1-17" stroke="#a8a957"/>
    </g>
    <g fill="#17171f"><circle cx="461" cy="143" r="1.300"/><circle cx="459" cy="147" r="1.300"/><circle cx="469" cy="151" r="1.800"/><circle cx="467" cy="154" r="1.300"/><circle cx="476" cy="157" r="1.800"/><circle cx="455" cy="190" r="1.500"/><circle cx="408" cy="265" r="1.500"/><circle cx="360" cy="340" r="1.500"/><circle cx="314" cy="414" r="1.500"/><circle cx="787" cy="536" r="1"/><circle cx="832" cy="461" r="1"/></g>
    <circle cx="949" cy="279" r="1.200" fill="#fff"/>
    <path d="m534 156 10 2-1 6-5 2-8-3z" fill="#0b0b86" stroke="#f3dfe8" stroke-width=".7"/>
    <g stroke="#d9d5f2" stroke-width="1.300"><path d="m1054 77 8-14h17q6 6 3 12-2 6-7 7z" fill="#1c4357"/><path d="m1067 61 8-13q10 6 11 16zM1068 46q7-7 8 2" fill="#080a48"/><path d="M1067 41v31"/></g>
    <circle cx="1067" cy="41" r="2" fill="#e7e2fa"/><path d="M1065 70h6v5h-6z" fill="#c7202a"/>
    <g fill="#b4bf62" font-size="8" font-style="italic"><text x="1071" y="41">z</text><text x="1081" y="48">y</text><text x="1091" y="64">x</text></g>
    <path d="m1103 584 6 7-5 2zM1103 584v-4M1109 591l2 2" stroke="#d6d8e8"/><text x="1098" y="584" font-size="7" fill="#d6d8e8">z</text>
   </svg>
   <nav class="tree d-flex flex-column" id="tree" aria-label="Albero delle specifiche">
    <svg class="branches" viewBox="8 22 240 575" preserveAspectRatio="none" fill="none" stroke="#c3c6d8" stroke-width="2" id="branches">
     <path d="M12 25V597M23 47V168M23 188V387M23 407V417M23 578V597M34 62V152M34 219V340M34 422V543M45 235V323M45 345V370M45 437V527M45 547V557"/>
    </svg>
   </nav>
   <div id="palettes"></div>
  </section>
  <div class="hscroll d-flex justify-content-between flex-shrink-0">
   <button aria-label="Sinistra"><svg width="4" height="5"><path d="M4 0v5L0 2.500z" fill="#15154a"/></svg></button>
   <button aria-label="Destra"><svg width="4" height="5"><path d="M0 0v5l4-2.500z" fill="#15154a"/></svg></button>
  </div>
 </div>
 <aside class="rail d-flex flex-column align-items-center flex-shrink-0" id="rail"></aside>
</main>

<div class="toolbar d-flex align-items-center flex-shrink-0" id="toolbar" role="toolbar" aria-label="Strumenti"></div>
<footer class="status d-flex align-items-center flex-shrink-0">
 <span class="me-auto">Estrazione.1/Gruppo geometrico.1/ELEC_COMPONENT_1 selezionato</span>
 <input type="text" aria-label="Comando">
 <button class="ms-1 dim" aria-label="Finestra di dialogo"><svg width="9" height="9"><use href="#i-screen"/></svg></button>
 <button class="ms-1" aria-label="Schermo"><svg width="9" height="9"><use href="#i-screen"/></svg></button>
</footer>
</div>

<script>
const icon = n => `<svg aria-hidden="true"><use href="#i-${n}"/></svg>`;
// spec: "name", trailing "+" adds the drop-down mark, trailing "~" disables, "name:colour" tints
const tool = s => {
  const drop = s.endsWith('+'), off = s.endsWith('~');
  const [n, c] = s.replace(/[+~]$/, '').split(':');
  return `<button class="tool${drop ? ' drop' : ''}${off ? ' dim' : ''}" aria-label="${n}"${c ? ` style="color:${c}"` : ''}>${icon(n)}</button>`;
};

// [indent class, icon, label, knob x, stub start x, link classes]
const G = 'Gruppo geometrico.1', S = 'Sistemi di assi', E = 'Elementi pubblici';
const rows = [
 ['lv0','part','MAIN_ASSY'],
 ['lv1','docr','MAIN_ASSY_SKELETON (MAIN_ASSY_SKELETON)',12],
 ['lv2','part','MAIN_ASSY_SKELETON',23],
 ['lv3','plane','B',0,34],['lv3','plane','A',0,34],['lv3','plane','C',0,34],
 ['lv3','axis',S,34,0,'mix'],['lv3','set',G,34,0,'mix ul'],['lv3','body','PartBody',0,34,'mix'],
 ['pub1','',E,23,0,'mix'],
 ['lv1','doc','COMP_ASSY (COMP_ASSY)',12],
 ['lv2','docr','COMP_ASSY_SKELETON (COMP_ASSY_SKELETON)',23],
 ['lv2','docr','ELEC_COMPONENT_1 (ELEC_COMPONENT_1)',23],
 ['lv3','part','ELEC_COMPONENT_1',34,0,'sel'],
 ['lv4','plane','B',0,45],['lv4','plane','A',0,45],['lv4','plane','C',0,45],
 ['lv4','axis',S,45,0,'mix'],['lv4','setb',G,45,0,'mix ul hot'],['lv4','body','PartBody',45,0,'mix'],
 ['pub2','',E,34,0,'mix'],
 ['lv4','pub','Faccia',0,45,'mix'],['lv4','pub','Estrazione.1',0,45,'mix hot'],
 ['lv2','cons','Vincoli',23,0,'mix'],
 ['lv1','doc','PCB_ASSY_1 (PCB_ASSY_1)',12],
 ['lv2','docr','PCB_PART_1 (PCB_PART_1)',23],
 ['lv3','part','PCB_PART_1',34],
 ['lv4','planey','Piano xy',0,45,'mix'],['lv4','plane','Piano yz',0,45,'mix'],['lv4','plane','Piano zx',0,45,'mix'],
 ['lv4','axis',S,45,0,'mix'],['lv4','setb',G,0,45,'mix ul'],['lv4','body','PartBody',45,0,'mix'],
 ['pub2','',E,34,0,'mix'],
 ['lv4','pub','Faccia',0,45,'mix'],
 ['lv1','doc','BOX_ASSY (BOX_ASSY)',12],
 ['lv2','docr','BOX_ASSY_SKELETON (BOX_ASSY_SKELETON)',23]
];
let marks = '';
rows.forEach(([lv, ic, text, knob, stub, cls], i) => {
  document.getElementById('tree').insertAdjacentHTML('beforeend',
    `<div class="node d-flex align-items-center ${lv}">${ic ? icon(ic) : ''}<a href="#" class="${cls || ''}">${text}</a></div>`);
  const y = 22 + 575 / rows.length * (i + .5) - 2;
  if (knob) marks += `<path d="M${knob} ${y}h7" stroke-width="1.500"/><circle cx="${knob}" cy="${y}" r="2.800" fill="#1a2142" stroke-width="1.200"/><path d="M${knob - 2} ${y}h4" stroke-width="1"/>`;
  if (stub) marks += `<path d="M${stub} ${y}h6" stroke-width="1.500"/>`;
});
document.getElementById('branches').insertAdjacentHTML('beforeend', marks);

// [title, offset from the right edge, offset from the top, tools]
const palettes = [
 ['Fe...',268,87,'hole+ | mirror grid+ | scale+'],
 ['O...',187,183,'bool:#a7bb58 | bool:#e88a42+ bool:#4ba2cf | lump'],
 ['Fe...',102,99,'fillet+ chamfer draft+ shell thick thread face+'],
 ['Sk...',12,102,'sketch+'],
 ['Fe...',19,157,'pad+ pocket+ shaft groove holes rib:#b8c675 slot solid+ loft:#e4df59 loft:#59c0b6'],
 ['A...',54,266,'abc+ flag+ stamp'],
 ['El...',86,335,'point line planeb'],
 ['Vi...',43,360,'dim dim2'],
 ['Fe...',7,406,'surf+'],
 ['P...',8,456,'ball:#111 ball:#d42c22 ball:#653aa8']
];
document.getElementById('palettes').innerHTML = palettes.map(([t, r, y, list]) =>
 `<div class="palette" style="right:${r}px;top:${y}px"><header class="d-flex align-items-center justify-content-between"><span>${t}</span><button class="text-white" aria-label="Chiudi"><svg width="5" height="5"><use href="#i-x"/></svg></button></header>
 <div class="pbody d-flex flex-column align-items-center">${list.split(' ').map(s => s === '|' ? '<hr class="w-100">' : tool(s)).join('')}</div></div>`).join('');

document.getElementById('rail').innerHTML =
 '<hr><div class="mt-1">' + tool('wheel') + '</div><hr class="mt-2"><div class="mt-1">' + 'boxes~ boxes~ boxes~ boxes~'.split(' ').map(tool).join('') + '</div><hr class="mt-3"><div class="mt-1">' + tool('cursor+') + '</div>';

const groups = [
 'new open save print cut copy paste undo+ redo+ help',
 'fx bubble nine~ table+ graph lock+ rule',
 'fly fit pan rot zin zout normal multi cube+ shade+ view view2',
 'catalog','meas clamp mass','cam',
 'swirl globe axes tol stack+ joint layers+ sheet',
 'sk1 sk2 sk3 sk4','paint','book+ book2+'
];
document.getElementById('toolbar').innerHTML = groups.map((g, i) =>
 `<span class="grip"></span><div class="d-flex${i === 1 ? ' tight' : ''}">${g.split(' ').map(tool).join('')}</div>` +
 (i === 6 ? '<div class="picker"><select aria-label="Oggetto di lavoro"><option>Gruppo geometrico.1</option></select></div>' : '')).join('') +
 `<svg class="ms-auto me-1" width="25" height="20" viewBox="0 0 25 20" role="img" aria-label="CATIA"><path d="m9 1 6 1-3 5 8 5M11 7l-3 4" fill="none" stroke="#d8552f" stroke-width="1.500"/><path d="m3 13 4-7q4 0 2 4t-7 3" fill="none" stroke="#2b3178" stroke-width="1.300"/><text x="4" y="19" font-size="6" font-weight="700" font-style="italic" fill="#2b3178">CATIA</text></svg>`;
</script>
</body>
</html>
